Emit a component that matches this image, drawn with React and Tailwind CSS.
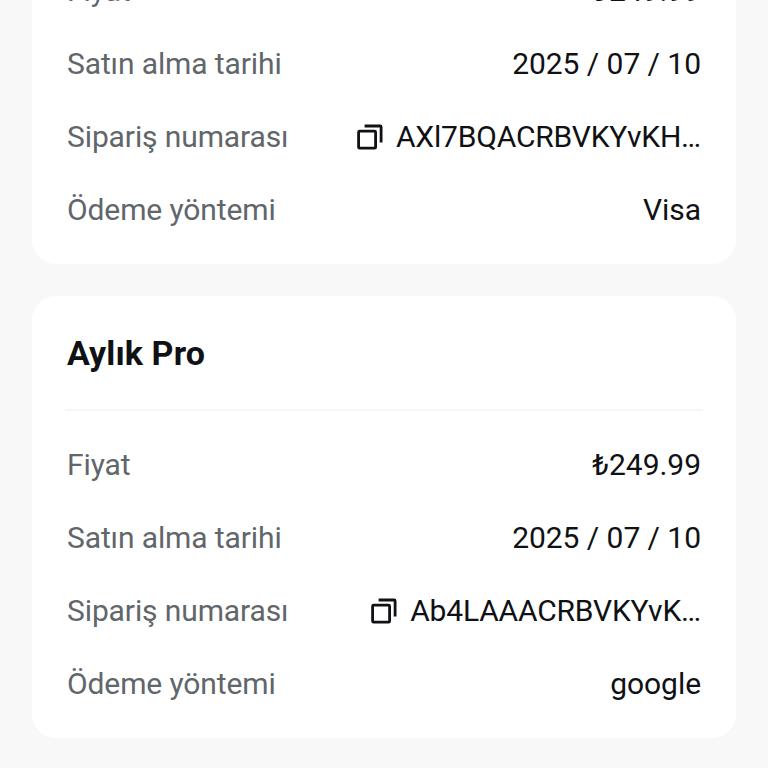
const ORDERS = [
  { title: "Aylık Pro", price: "₺249.99", date: "2025 / 07 / 10", orderNo: "AXl7BQACRBVKYvKH…", method: "Visa" },
  { title: "Aylık Pro", price: "₺249.99", date: "2025 / 07 / 10", orderNo: "Ab4LAAACRBVKYvK…", method: "google" },
];

function CopyIcon() {
  return (
    <svg width="26" height="26" viewBox="0 0 26 26" fill="none" stroke="#0f1115" strokeWidth="2.8" strokeLinejoin="round">
      <rect x="1.6" y="7.2" width="17" height="17" rx="1" />
      <path d="M7.6 2h15.6a.9.9 0 0 1 .9.9v15.6" />
    </svg>
  );
}

function Row({ label, children }) {
  return (
    <div className="flex h-[73px] items-center justify-between">
      <span className="tracking-[-0.11px] text-[#61666b]">{label}</span>
      <span className="flex items-center gap-[13px] tracking-[-0.04px] text-[#0f1115]">{children}</span>
    </div>
  );
}

function OrderCard({ order }) {
  return (
    <section className="h-[442px] shrink-0 rounded-[24px] bg-white px-[33px]">
      <div className="flex h-[115px] items-center border-b-2 border-[#f6f6f7] px-[2px] pt-[2px]">
        <h2 className="text-[34px] font-bold tracking-[0.1px] text-[#0f1115]">{order.title}</h2>
      </div>
      <div className="px-[2px] pt-[17px] text-[30px] whitespace-nowrap">
        <Row label="Fiyat">{order.price}</Row>
        <Row label="Satın alma tarihi">{order.date}</Row>
        <Row label="Sipariş numarası">
          <CopyIcon />
          <span className="tracking-[-0.18px]">{order.orderNo}</span>
        </Row>
        <Row label="Ödeme yöntemi">{order.method}</Row>
      </div>
    </section>
  );
}

export default function App() {
  return (
    <main className="flex h-[768px] flex-col justify-end gap-8 overflow-hidden bg-[#f8f8f8] px-8 pb-[30px] font-[Roboto,sans-serif]">
      {ORDERS.map(o => <OrderCard key={o.orderNo} order={o} />)}
    </main>
  );
}
